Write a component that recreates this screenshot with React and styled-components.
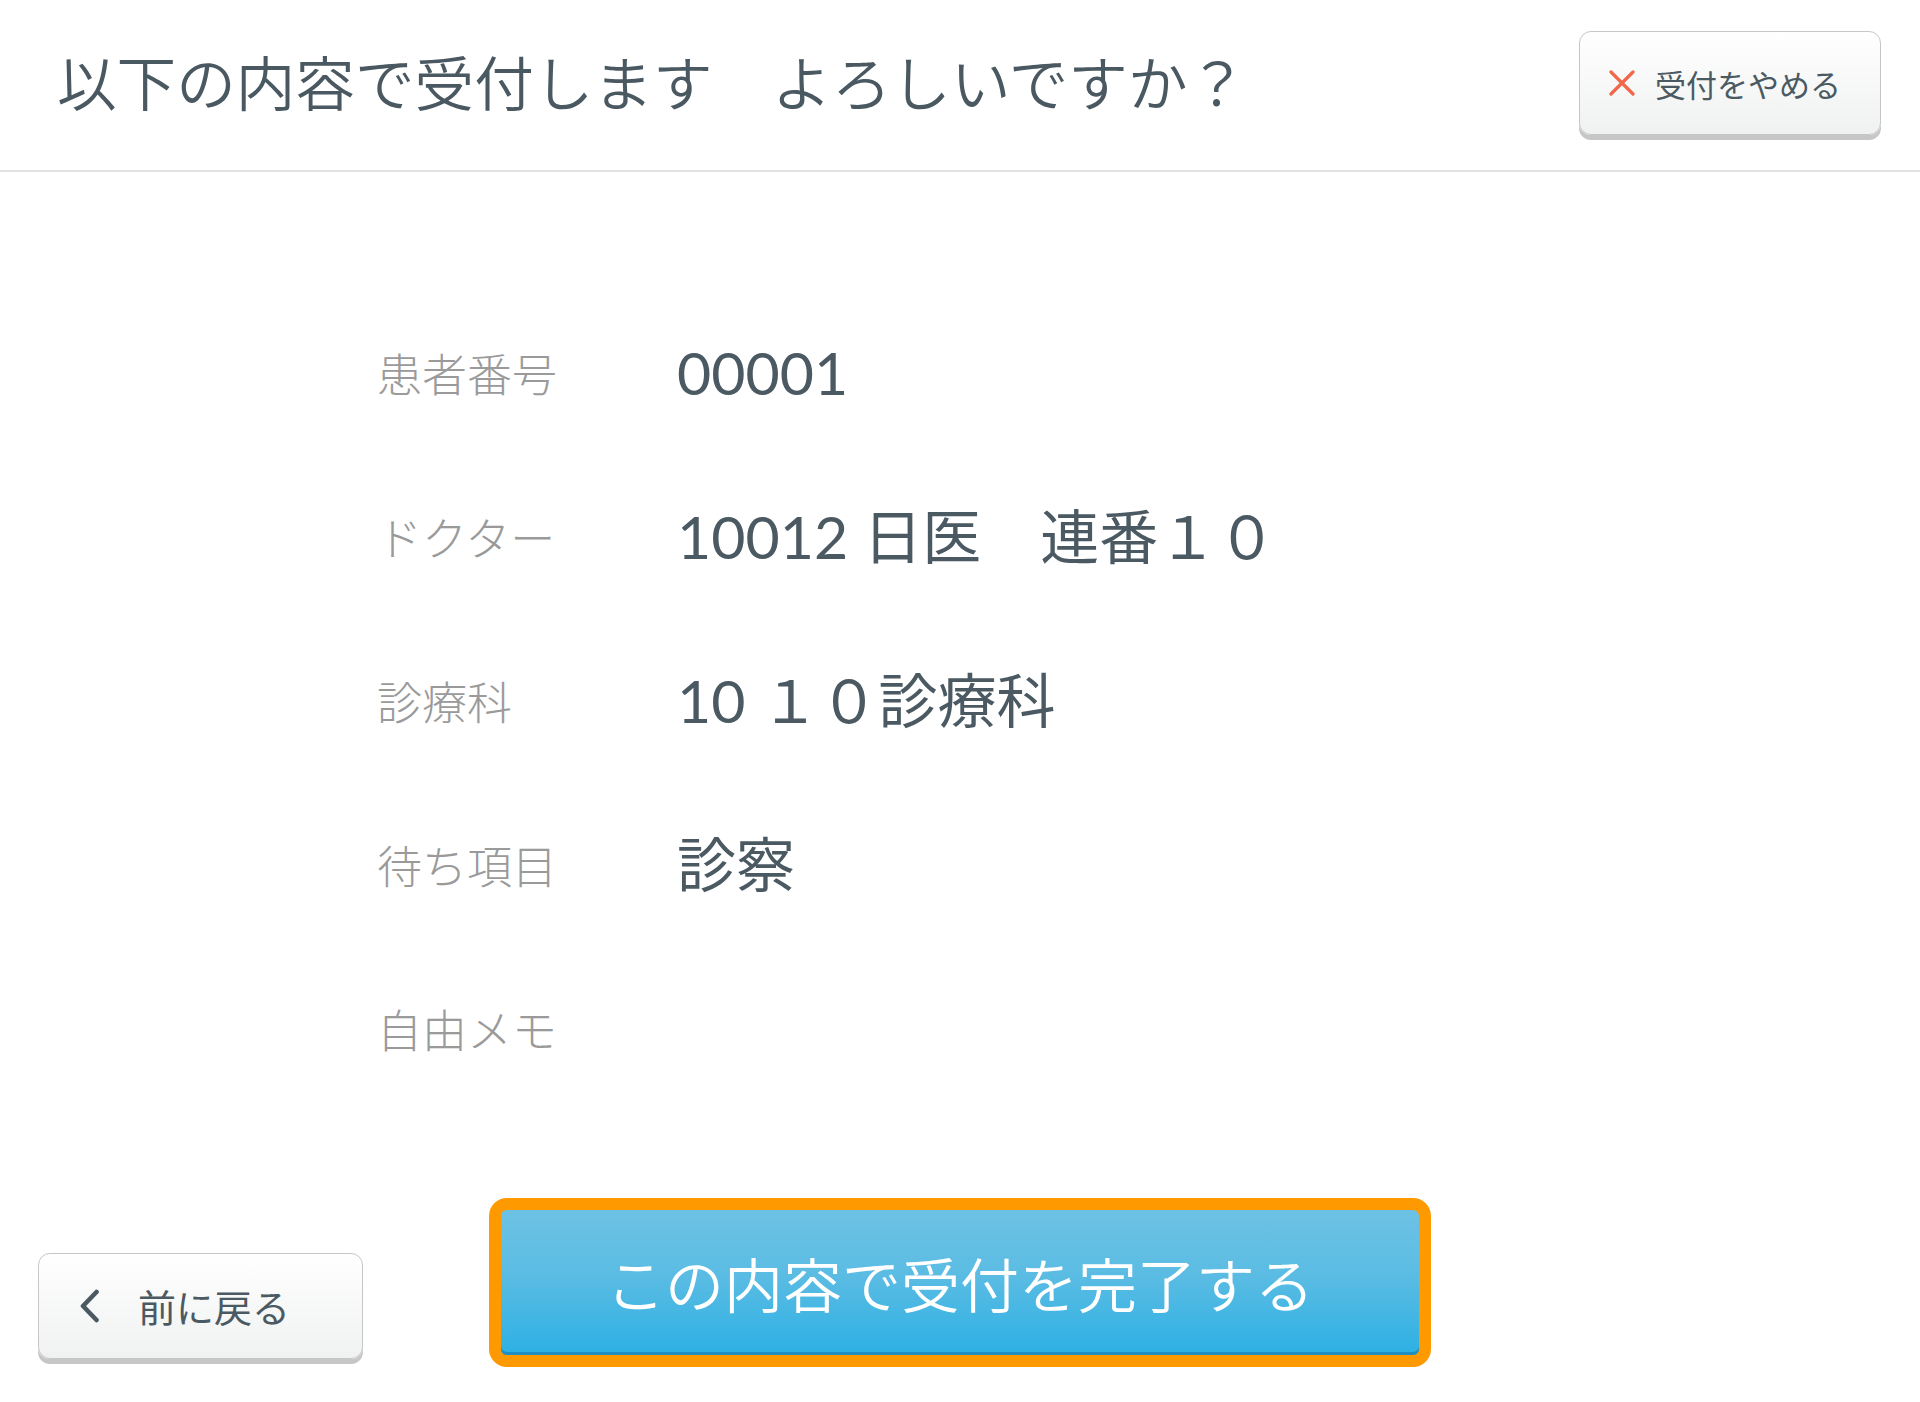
import React from 'react';
import styled, { createGlobalStyle } from 'styled-components';

const GlobalStyle = createGlobalStyle`
  html, body { margin: 0; padding: 0; background: #ffffff; }
  body { font-family: "Noto Sans CJK JP", "Noto Sans", sans-serif; }
  * { box-sizing: border-box; }
`;

const Page = styled.div`
  width: 1920px;
  height: 1402px;
  display: flex;
  flex-direction: column;
  background: #ffffff;
  overflow: hidden;
`;

const Header = styled.header`
  height: 172px;
  flex-shrink: 0;
  display: flex;
  align-items: center;
  justify-content: space-between;
  padding: 0 39px 0 57px;
  border-bottom: 2px solid #e2e2e2;
`;

const Title = styled.h1`
  margin: 0 0 8px;
  font-size: 59.6px;
  font-weight: 350;
  line-height: 1;
  color: #4a5961;
`;

const SoftButton = styled.button`
  display: flex;
  align-items: center;
  gap: ${(p) => p.$gap}px;
  width: ${(p) => p.$w}px;
  height: ${(p) => p.$h}px;
  margin-bottom: ${(p) => p.$mb || 0}px;
  padding: 0 0 0 ${(p) => p.$pl}px;
  border: 1.5px solid #c6c6c6;
  border-radius: 12px;
  background: linear-gradient(#ffffff, #f0f1f1);
  box-shadow: 0 5px 0 #c6c6c6;
  font-family: inherit;
  font-size: ${(p) => p.$fs}px;
  font-weight: 400;
  line-height: 1;
  color: #4b5a62;
  cursor: pointer;
`;

const Details = styled.main`
  display: flex;
  flex-direction: column;
  padding: 118px 0 0 377px;
`;

const Row = styled.div`
  display: grid;
  grid-template-columns: 300px 1fr;
  align-items: center;
  height: 164px;
`;

const Label = styled.span`
  font-size: 45px;
  font-weight: 300;
  line-height: 1;
  color: #9a9a9a;
`;

const Value = styled.span`
  font-family: "Lato", "Noto Sans CJK JP", sans-serif;
  font-size: 59px;
  line-height: 1;
  color: #4b5a62;
  white-space: pre;
`;

const Footer = styled.footer`
  margin-top: auto;
  display: grid;
  grid-template-columns: 1fr auto 1fr;
  align-items: end;
  padding-bottom: 35px;
`;

const LeftCell = styled.div`
  display: flex;
  padding-left: 38px;
`;

const FocusRing = styled.div`
  padding: 12px;
  background: #ff9900;
  border-radius: 18px;
`;

const PrimaryButton = styled.button`
  display: flex;
  align-items: center;
  justify-content: center;
  width: 918px;
  height: 145px;
  border: none;
  border-radius: 6px;
  background: linear-gradient(#6cc2e5, #5bbce3 45%, #2cb0e4);
  box-shadow: inset 0 -3px 0 #1f8fc2;
  color: #ffffff;
  font-family: inherit;
  font-size: 59px;
  font-weight: 350;
  line-height: 1;
  cursor: pointer;
`;

const CloseIcon = () => (
  <svg width="26" height="26" viewBox="0 0 26 26" aria-hidden="true">
    <path d="M2 2 L24 24 M24 2 L2 24" stroke="#f0674a" strokeWidth="3.2" strokeLinecap="round" fill="none" />
  </svg>
);

const BackIcon = () => (
  <svg width="20" height="34" viewBox="0 0 20 34" aria-hidden="true">
    <polyline points="16.5,3 3,17 16.5,31" stroke="#4b5a62" strokeWidth="4.6" strokeLinecap="round" strokeLinejoin="round" fill="none" />
  </svg>
);

const rows = [
  ['患者番号', '00001'],
  ['ドクター', '10012 日医　連番１０'],
  ['診療科', '10 １０診療科'],
  ['待ち項目', '診察'],
  ['自由メモ', ''],
];

export default function App() {
  return (
    <>
      <GlobalStyle />
      <Page>
        <Header>
          <Title>以下の内容で受付します　よろしいですか？</Title>
          <SoftButton $w={302} $h={104} $pl={29} $gap={20} $fs={31} $mb={4}>
            <CloseIcon />
            <span>受付をやめる</span>
          </SoftButton>
        </Header>
        <Details>
          {rows.map(([label, value]) => (
            <Row key={label}>
              <Label>{label}</Label>
              <Value>{value}</Value>
            </Row>
          ))}
        </Details>
        <Footer>
          <LeftCell>
            <SoftButton $w={325} $h={106} $pl={41} $gap={38} $fs={38} $mb={8}>
              <BackIcon />
              <span>前に戻る</span>
            </SoftButton>
          </LeftCell>
          <FocusRing>
            <PrimaryButton>この内容で受付を完了する</PrimaryButton>
          </FocusRing>
          <div />
        </Footer>
      </Page>
    </>
  );
}
